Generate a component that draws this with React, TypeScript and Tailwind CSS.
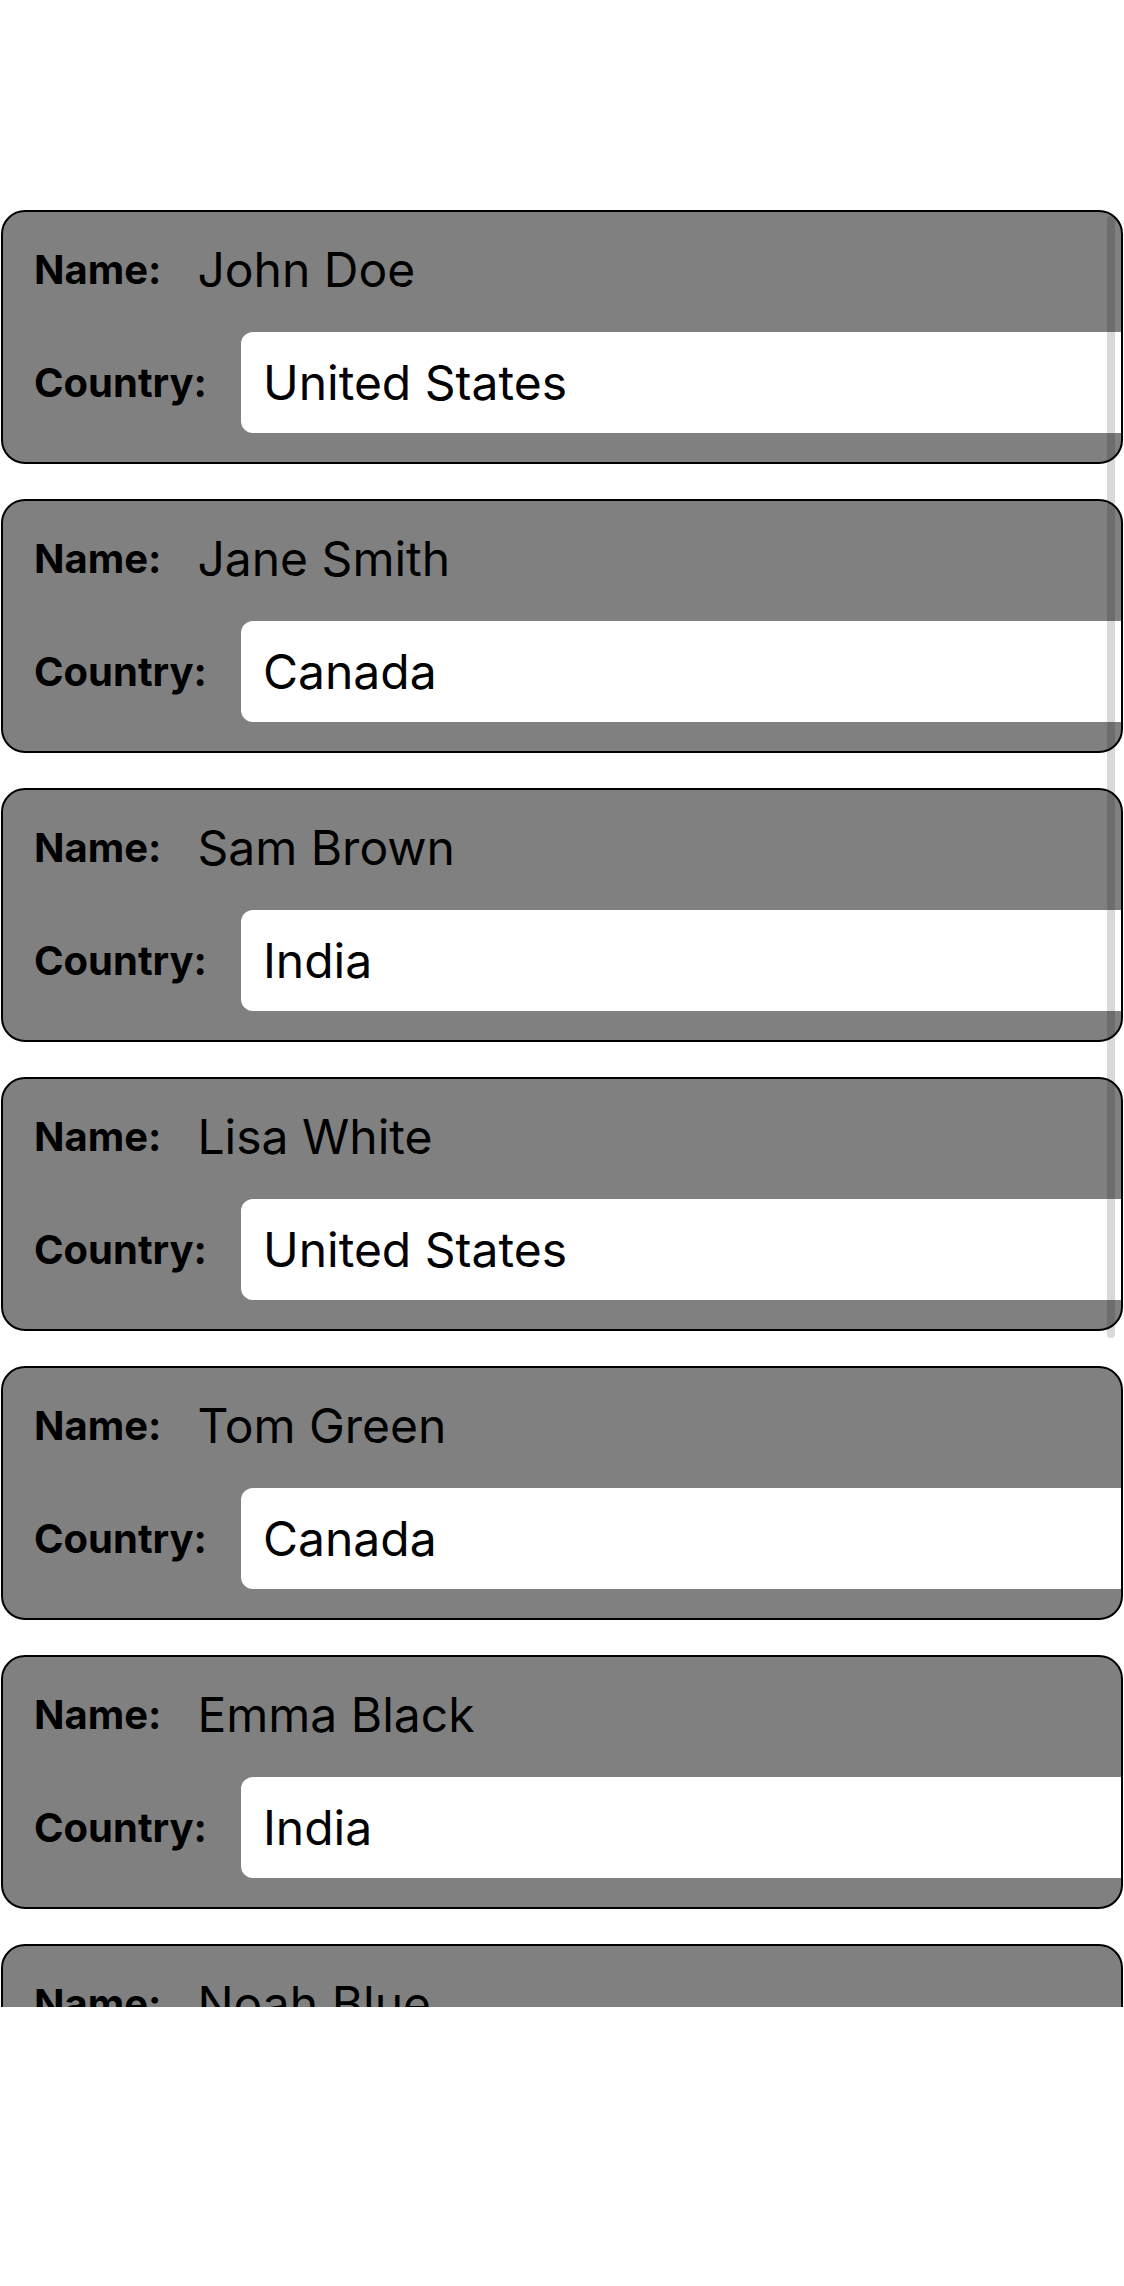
import React from "react";

const people = [
  { name: "John Doe", country: "United States" },
  { name: "Jane Smith", country: "Canada" },
  { name: "Sam Brown", country: "India" },
  { name: "Lisa White", country: "United States" },
  { name: "Tom Green", country: "Canada" },
  { name: "Emma Black", country: "India" },
  { name: "Noah Blue", country: "United States" },
  { name: "Mia Gray", country: "Canada" },
];

function Card({ name, country }: { name: string; country: string }) {
  return (
    <div className="mx-[1px] h-[254px] shrink-0 overflow-hidden rounded-[24px] border-2 border-black bg-[#808080] py-[28px] pl-[31px]">
      <div className="flex h-[60px] items-center">
        <span className="mr-[36px] text-[40px] font-bold leading-none text-black">Name:</span>
        <span className="text-[48px] leading-none text-black">{name}</span>
      </div>
      <div className="mt-[32px] flex h-[101px] items-center">
        <span className="mr-[34px] text-[40px] font-bold leading-none text-black">Country:</span>
        <div className="-mr-[20px] flex h-[101px] flex-1 items-center rounded-[12px] bg-white pl-[22px]">
          <span className="text-[48px] leading-none text-black">{country}</span>
        </div>
      </div>
    </div>
  );
}

export default function App() {
  return (
    <div className="h-[2286px] w-[1124px] bg-white" style={{ fontFamily: "Inter, 'Noto Sans', sans-serif" }}>
      <div className="h-[210px]" />
      <div className="relative h-[1797px] overflow-hidden">
        <div className="flex flex-col gap-[35px]">
          {people.map((p) => (
            <Card key={p.name} name={p.name} country={p.country} />
          ))}
        </div>
        <div className="absolute left-[1107px] top-[6px] h-[1122px] w-[8px] rounded-full bg-[rgba(0,0,0,0.15)]" />
      </div>
    </div>
  );
}
